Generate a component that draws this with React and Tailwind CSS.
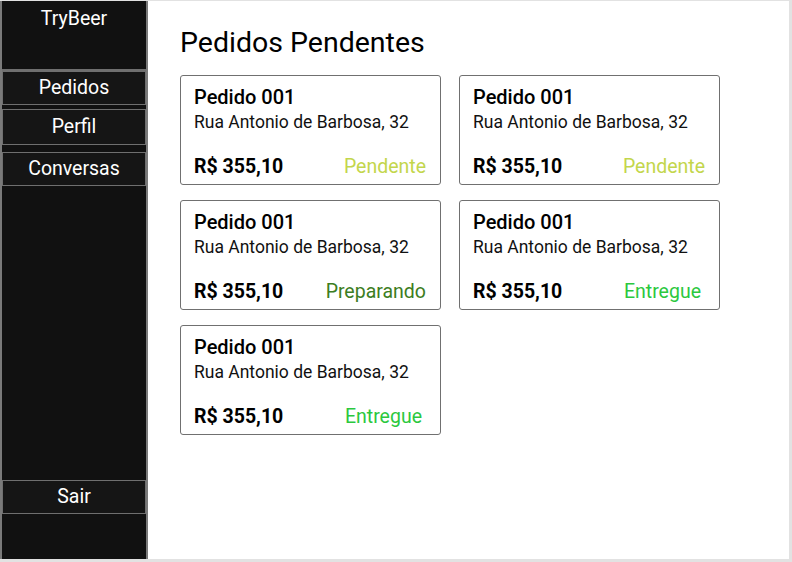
const orders = [
  { id: "001", address: "Rua Antonio de Barbosa, 32", price: "R$ 355,10", status: "Pendente" },
  { id: "001", address: "Rua Antonio de Barbosa, 32", price: "R$ 355,10", status: "Pendente" },
  { id: "001", address: "Rua Antonio de Barbosa, 32", price: "R$ 355,10", status: "Preparando" },
  { id: "001", address: "Rua Antonio de Barbosa, 32", price: "R$ 355,10", status: "Entregue" },
  { id: "001", address: "Rua Antonio de Barbosa, 32", price: "R$ 355,10", status: "Entregue" },
];

const statusColor = {
  Pendente: "text-[#c3d64c]",
  Preparando: "text-[#3c7d22]",
  Entregue: "text-[#2bc83e] mr-[4px]",
};

function SideButton({ label, className = "" }) {
  return (
    <div
      className={`h-[34px] flex items-center justify-center border border-[#6f6f6f] bg-[#151515] text-white text-[19.5px] ${className}`}
    >
      {label}
    </div>
  );
}

function OrderCard({ order }) {
  return (
    <div className="w-[261px] h-[110px] border border-[#707070] rounded-[3px] bg-white pl-[13px] pr-[14px] pt-[9px] flex flex-col">
      <div className="text-[20px] font-medium text-black leading-[24px]">Pedido {order.id}</div>
      <div className="text-[17.5px] text-[#111] leading-[22px] mt-[2px]">{order.address}</div>
      <div className="flex justify-between items-center mt-[19px]">
        <span className="text-[19.5px] font-bold text-black">{order.price}</span>
        <span className={`text-[19.5px] ${statusColor[order.status]}`}>{order.status}</span>
      </div>
    </div>
  );
}

export default function App() {
  return (
    <div
      className="w-[792px] h-[562px] flex border-t border-r-[3px] border-b-[3px] border-[#e2e2e2] bg-white overflow-hidden"
      style={{ fontFamily: "Roboto, 'Liberation Sans', sans-serif" }}
    >
      {/* SIDEBAR */}
      <div className="w-[148px] h-full bg-[#111111] border-l-2 border-r-2 border-[#7a7a7a] flex flex-col">
        <div className="h-[70px] border-b-2 border-[#6f6f6f] flex justify-center pt-[3px] text-white text-[19.5px]">
          TryBeer
        </div>
        <SideButton label="Pedidos" className="mt-0" />
        <SideButton label="Perfil" className="mt-[4px] h-[36px]" />
        <SideButton label="Conversas" className="mt-[7px]" />
        <div className="flex-1" />
        <SideButton label="Sair" className="mb-[45px]" />
      </div>

      {/* CONTENT */}
      <div className="flex-1 pl-[32px] pt-[26px]">
        <h1 className="text-[28.5px] text-black leading-[32px] mb-[16px]">Pedidos Pendentes</h1>
        <div className="grid grid-cols-[261px_261px] gap-x-[18px] gap-y-[15px]">
          {orders.map((o, i) => (
            <OrderCard key={i} order={o} />
          ))}
        </div>
      </div>
    </div>
  );
}
